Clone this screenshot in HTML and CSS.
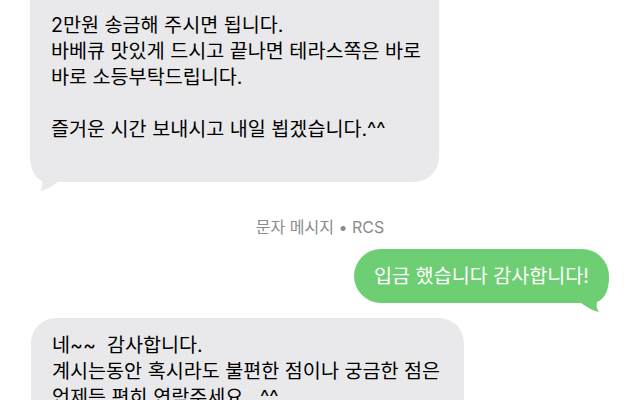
FILE: index.html
```html
<!DOCTYPE html>
<html lang="ko">
<head>
    <meta charset="UTF-8">
    <title>메시지</title>
    <link rel="stylesheet" href="styles.css">
</head>
<body>

<div class="chat">
    <div class="bubble in cut">
        <p>2만원 송금해 주시면 됩니다.<br>바베큐 맛있게 드시고 끝나면 테라스쪽은 바로<br>바로 소등부탁드립니다.<br>&nbsp;<br>즐거운 시간 보내시고 내일 뵙겠습니다.^^<br>&nbsp;</p>
        <svg class="tail" viewBox="0 0 30 36" width="30" height="36"><path d="M0,0 C0,12 4,22 12,25 C13,29 12,32 10,35 C16,34 22,30 28,26 L28,0 Z"/></svg>
    </div>

    <div class="service">문자 메시지 • RCS</div>

    <div class="bubble out">
        <p>입금 했습니다 감사합니다!</p>
        <svg class="tail" viewBox="0 0 30 36" width="30" height="36"><path d="M0,0 C0,12 4,22 12,25 C13,29 12,32 10,35 C16,34 22,30 28,26 L28,0 Z"/></svg>
    </div>

    <div class="bubble in">
        <p>네~~&nbsp; 감사합니다.<br>계시는동안 혹시라도 불편한 점이나 궁금한 점은<br>언제든 편히 연락주세요.&nbsp; ^^</p>
    </div>
</div>

</body>
</html>
```

FILE: styles.css
```css
body {
    margin: 0;
    background-color: #fff;
    font-family: Inter, "Noto Sans CJK KR", sans-serif;
    overflow: hidden;
}

.chat {
    display: flex;
    flex-direction: column;
    width: 640px;
    height: 400px;
}

.bubble {
    position: relative;
    width: fit-content;
    border-radius: 25px;
    padding: 14px 18px 14px 21px;
    font-size: 19.6px;
    line-height: 26px;
}

.bubble p {
    position: relative;
    z-index: 1;
    margin: 0;
    white-space: nowrap;
}

.bubble .tail {
    position: absolute;
    bottom: -10px;
    z-index: 0;
}

.bubble.in {
    align-self: flex-start;
    margin-left: 30px;
    background-color: #e9e9eb;
    color: #000;
}

.bubble.in .tail {
    left: 0;
    fill: #e9e9eb;
}

.bubble.cut {
    border-top-left-radius: 0;
    border-top-right-radius: 0;
    padding-top: 12px;
}

.bubble.out {
    align-self: flex-end;
    margin-right: 31px;
    margin-top: 12px;
    border-radius: 27px;
    background-color: #6ece73;
    color: #fff;
    padding-left: 20px;
    padding-right: 20px;
}

.bubble.out .tail {
    right: 0;
    fill: #6ece73;
    transform: scaleX(-1);
}

.bubble.out + .bubble.in {
    margin-top: 15px;
    margin-left: 31px;
    padding-right: 24px;
}

.service {
    margin-top: 35px;
    text-align: center;
    font-size: 16px;
    line-height: 20px;
    color: #8a8a8e;
}
```
